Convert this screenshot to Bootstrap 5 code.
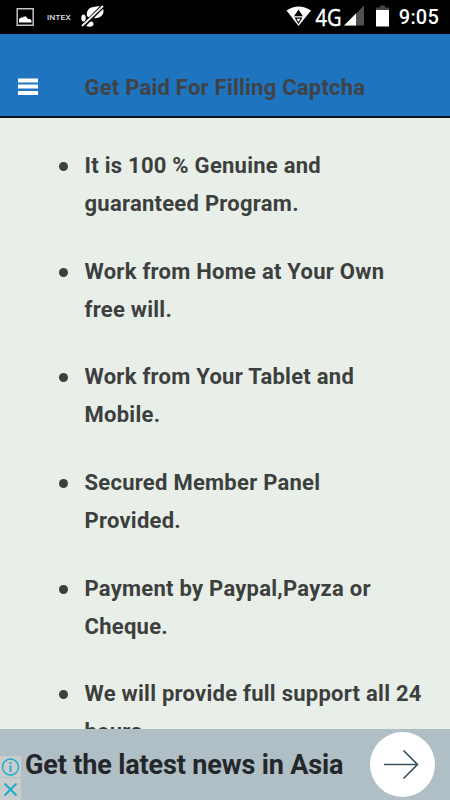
<!DOCTYPE html>
<html lang="en">
<head>
<meta charset="utf-8">
<meta name="viewport" content="width=device-width, initial-scale=1">
<title>Get Paid For Filling Captcha</title>
<link href="https://cdn.jsdelivr.net/npm/bootstrap@5.3.0/dist/css/bootstrap.min.css" rel="stylesheet">
<style>
body{font-family:Roboto,sans-serif;background:#e8efe8;color:#3d3f3e}
.screen{height:800px;overflow:hidden}
.statusbar{height:34px;background:#000;color:#fff}
.statusbar svg,.topbar svg,.ad svg{display:block}
.clock{font-size:20px;font-weight:500;line-height:34px;letter-spacing:.2px;margin-right:11px;margin-left:9px}
.topbar{height:84px;background:#1f74bf;border-bottom:2px solid #061420;padding:24px 0 0 18px}
.menu-btn{width:20px;height:18px}
.title{font-size:22px;font-weight:700;line-height:30px;margin-left:46.500px;padding-top:2px;color:#3f4346;letter-spacing:.23px}
.features{font-size:22px;font-weight:700;line-height:38px;letter-spacing:.26px;padding:29px 0 0 84.500px}
.features li{margin-bottom:29.7px;white-space:nowrap;position:relative}
.features li::before{content:"";position:absolute;left:-25.500px;top:15px;width:9px;height:9px;border-radius:50%;background:#3d3f3e}
.ad{height:71px;background:#b0bec6;color:#242729}
.ad-text{font-size:27px;font-weight:700;line-height:32px;letter-spacing:-.14px;margin-left:3px;width:345px}
.ad-marks{width:22px;height:44px}
.go{width:65px;height:65px;background:#fff}
</style>
</head>
<body>
<div class="screen d-flex flex-column">
  <div class="statusbar d-flex align-items-center justify-content-between flex-shrink-0">
    <svg width="110" height="34" viewBox="0 0 110 34">
      <path d="M17.2 8.8H33.2V25.2H17.2Z" fill="none" stroke="#c4c4c4" stroke-width="1.5"/>
      <path d="M19 22.5V19L21 17.5H23L24 16.5H26L28 19H30L31.5 20.5V22.5Z" fill="#fff"/>
      <text x="47" y="19.5" font-family="Inter,sans-serif" font-size="6.500" font-weight="600" fill="#ddd" textLength="24" lengthAdjust="spacingAndGlyphs">INTEX</text>
      <path d="M87 16C86 11 89 7 94 7C99 5 104 7 103.500 12C103 16 98 19 93 18C90 18 88 17 87 16Z" fill="#fff"/>
      <ellipse cx="83.500" cy="18" rx="2.200" ry="3.500" fill="#fff"/>
      <ellipse cx="89.500" cy="24" rx="4" ry="2.700" fill="#fff"/>
      <path d="M82 27L103 6" stroke="#000" stroke-width="4"/>
      <path d="M82 26L103 6" stroke="#eee" stroke-width="1.800"/>
    </svg>
    <div class="d-flex align-items-center">
      <svg width="105" height="34" viewBox="285 0 105 34">
        <path d="M286.500 10.500Q298.500 2.500 311 10.500L298.500 26Z" fill="#fff"/>
        <path d="M298.500 9.500L303 16.300H294ZM294.500 17.500H302.500L298.500 24Z" fill="#000"/>
        <path d="M296.500 18.800H300.500L298.500 22Z" fill="#fff"/>
        <text x="315.500" y="25.500" font-family="Open Sans,sans-serif" font-size="24.500" fill="#fff" stroke="#fff" stroke-width=".5" textLength="26" lengthAdjust="spacingAndGlyphs">4G</text>
        <path d="M344 25.500L364 5.500V25.500Z" fill="#505050"/>
        <path d="M344 25.500L356 13.500V25.500Z" fill="#fff"/>
        <path d="M380 5.500H385V7.500H389V10H376V7.500H380Z" fill="#444"/>
        <path d="M376 10H389V26.500H376Z" fill="#fff"/>
      </svg>
      <span class="clock">9:05</span>
    </div>
  </div>
  <header class="topbar d-flex align-items-center flex-shrink-0">
    <svg class="menu-btn" viewBox="0 0 20 18"><path d="M0 2.500H20M0 8.500H20M0 15H20" stroke="#fff" stroke-width="3.800"/></svg>
    <h1 class="title mb-0">Get Paid For Filling Captcha</h1>
  </header>
  <main class="flex-grow-1 overflow-hidden">
    <ul class="features list-unstyled mb-0">
      <li>It is 100 % Genuine and<br>guaranteed Program.</li>
      <li>Work from Home at Your Own<br>free will.</li>
      <li>Work from Your Tablet and<br>Mobile.</li>
      <li>Secured Member Panel<br>Provided.</li>
      <li>Payment by Paypal,Payza or<br>Cheque.</li>
      <li>We will provide full support all 24<br>hours.</li>
    </ul>
  </main>
  <footer class="ad d-flex align-items-center flex-shrink-0">
    <svg class="ad-marks align-self-end" viewBox="0 0 22 44">
      <path d="M0 0H21V21H0ZM0 22H21V44H0Z" fill="#c9cccd"/>
      <circle cx="10.500" cy="11" r="8" fill="none" stroke="#16adc9" stroke-width="1.400"/>
      <path d="M10.500 9.500V16M10.500 6V8M4.500 27.500L16.500 39.500M16.500 27.500L4.500 39.500" stroke="#16adc9" stroke-width="1.800" fill="none"/>
    </svg>
    <div class="ad-text text-nowrap">Get the latest news in Asia</div>
    <div class="go rounded-circle d-flex align-items-center justify-content-center flex-shrink-0">
      <svg width="40" height="32" viewBox="0 0 40 32"><path d="M1 15.500H34M20.500 1.500L34.500 15.500L20.500 29.500" stroke="#34515e" stroke-width="1.600" fill="none"/></svg>
    </div>
  </footer>
</div>
<script src="https://cdn.jsdelivr.net/npm/bootstrap@5.3.0/dist/js/bootstrap.bundle.min.js"></script>
</body>
</html>
